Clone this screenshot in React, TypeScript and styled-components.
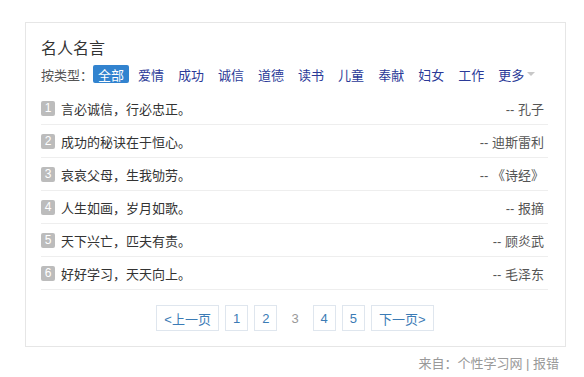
import * as React from 'react';
import styled, { createGlobalStyle } from 'styled-components';

const GlobalStyle = createGlobalStyle`
  html, body {
    margin: 0;
    padding: 0;
    background: #fff;
  }
  body {
    font-family: "Liberation Sans", Arial, "Noto Sans CJK SC", sans-serif;
    color: #333;
  }
`;

const Page = styled.div`
  width: 584px;
  padding: 22px 0 0 25px;
  box-sizing: border-box;
`;

const Card = styled.div`
  width: 541px;
  box-sizing: border-box;
  border: 1px solid #e6e6e6;
  padding: 16px 16px 15px 15px;
`;

const Title = styled.div`
  font-size: 16px;
  line-height: 20px;
  color: #333;
`;

const TypeBar = styled.div`
  display: flex;
  align-items: center;
  margin-top: 6px;
  height: 18px;
  font-size: 13px;
`;

const TypeLabel = styled.span`
  color: #555;
`;

const TypeLink = styled.a<{ $active?: boolean }>`
  display: inline-flex;
  align-items: center;
  height: 18px;
  padding: 0 5px;
  border-radius: 2px;
  text-decoration: none;
  cursor: pointer;
  color: ${p => (p.$active ? '#fff' : '#2b3a98')};
  background: ${p => (p.$active ? '#3283cf' : 'transparent')};

  & + & {
    margin-left: 4px;
  }
`;

const Caret = styled.span`
  display: inline-block;
  width: 0;
  height: 0;
  margin-left: 3px;
  border-left: 4px solid transparent;
  border-right: 4px solid transparent;
  border-top: 4px solid #c8c8c8;
`;

const List = styled.ul`
  list-style: none;
  margin: 9px 0 0;
  padding: 0;
  width: 507px;
`;

const Row = styled.li`
  display: flex;
  align-items: center;
  height: 32px;
  border-bottom: 1px solid #eeeeee;
  font-size: 13px;
`;

const Num = styled.span`
  display: inline-flex;
  align-items: center;
  justify-content: center;
  width: 14px;
  height: 15px;
  margin-right: 6px;
  border-radius: 2px;
  background: #bcbcbc;
  color: #fff;
  font-size: 12px;
  font-family: "Liberation Sans", Arial, sans-serif;
`;

const Quote = styled.span`
  flex: 1;
  color: #333;
`;

const Author = styled.span`
  color: #555;
  padding-right: 4px;
`;

const Pager = styled.div`
  display: flex;
  justify-content: center;
  gap: 6px;
  margin-top: 15px;
  font-size: 13px;
`;

const PageLink = styled.a<{ $current?: boolean }>`
  display: inline-flex;
  align-items: center;
  justify-content: center;
  height: 26px;
  padding: 0 7px;
  box-sizing: border-box;
  border: 1px solid ${p => (p.$current ? 'transparent' : '#dfe6ee')};
  color: ${p => (p.$current ? '#999' : '#3b7bb5')};
  text-decoration: none;
  cursor: pointer;
`;

const Footer = styled.div`
  width: 534px;
  margin-top: 6px;
  text-align: right;
  font-size: 13px;
  color: #999;
`;

const types = ['爱情', '成功', '诚信', '道德', '读书', '儿童', '奉献', '妇女', '工作'];

const quotes = [
  { text: '言必诚信，行必忠正。', by: '-- 孔子' },
  { text: '成功的秘诀在于恒心。', by: '-- 迪斯雷利' },
  { text: '哀哀父母，生我劬劳。', by: '-- 《诗经》' },
  { text: '人生如画，岁月如歌。', by: '-- 报摘' },
  { text: '天下兴亡，匹夫有责。', by: '-- 顾炎武' },
  { text: '好好学习，天天向上。', by: '-- 毛泽东' },
];

const pages = ['<上一页', '1', '2', '3', '4', '5', '下一页>'];

const App: React.FC = () => {
  return (
    <Page>
      <GlobalStyle />
      <Card>
        <Title>名人名言</Title>
        <TypeBar>
          <TypeLabel>按类型：</TypeLabel>
          <TypeLink $active>全部</TypeLink>
          {types.map(t => (
            <TypeLink key={t}>{t}</TypeLink>
          ))}
          <TypeLink>
            更多
            <Caret />
          </TypeLink>
        </TypeBar>
        <List>
          {quotes.map((q, i) => (
            <Row key={q.text}>
              <Num>{i + 1}</Num>
              <Quote>{q.text}</Quote>
              <Author>{q.by}</Author>
            </Row>
          ))}
        </List>
        <Pager>
          {pages.map(p => (
            <PageLink key={p} $current={p === '3'}>
              {p}
            </PageLink>
          ))}
        </Pager>
      </Card>
      <Footer>来自：个性学习网 | 报错</Footer>
    </Page>
  );
};

export default App;
